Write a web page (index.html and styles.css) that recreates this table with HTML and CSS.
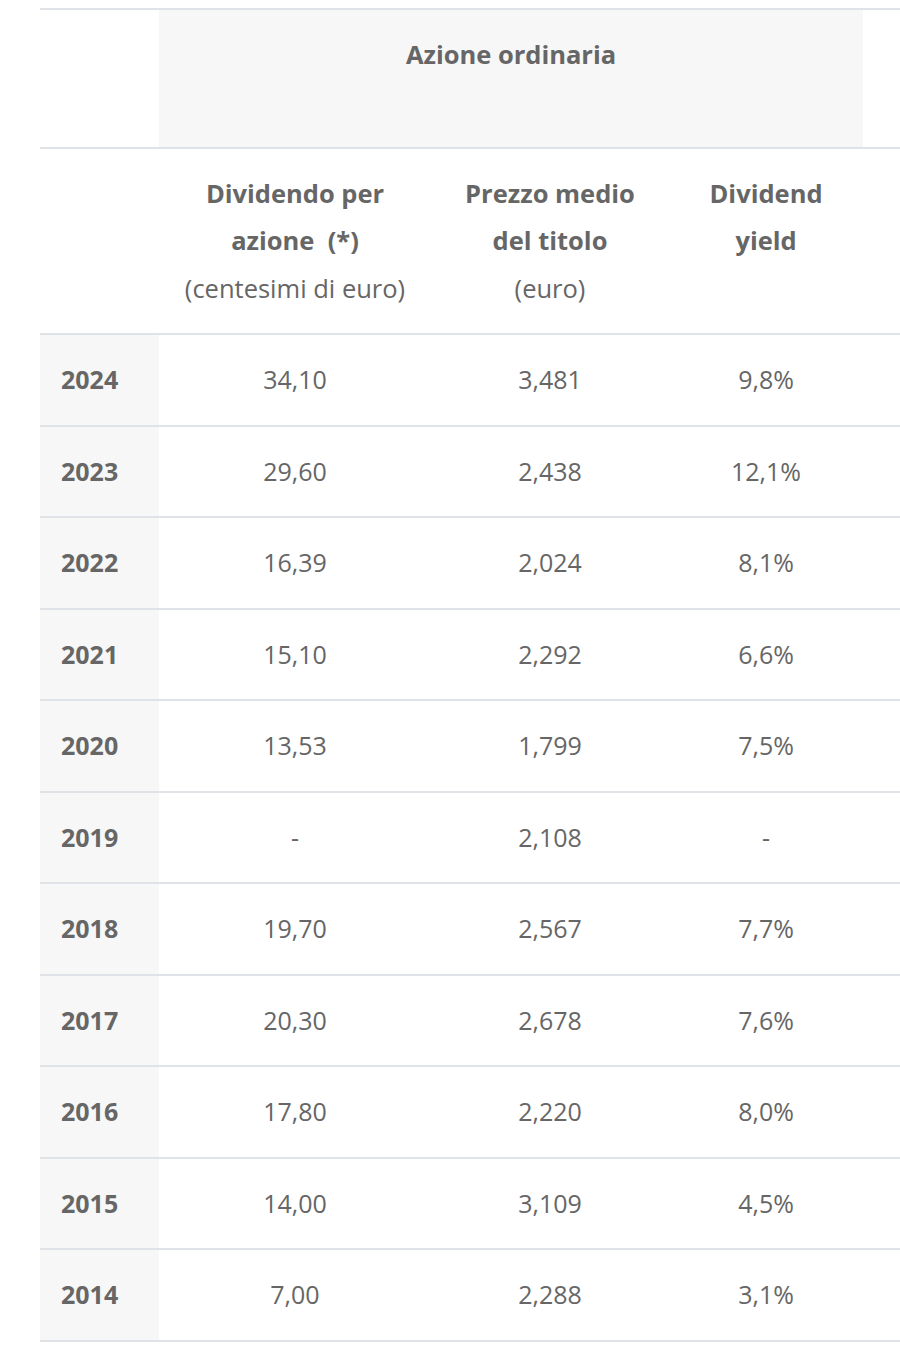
FILE: index.html
```html
<!DOCTYPE html>
<html lang="it">
<head>
<meta charset="utf-8">
<title>Dividendi</title>
<link rel="stylesheet" href="styles.css">
</head>
<body>
<div class="page">
<table class="divtable">
  <colgroup>
    <col class="c-year">
    <col class="c-div">
    <col class="c-price">
    <col class="c-yield">
    <col class="c-extra">
  </colgroup>
  <thead>
    <tr class="group-row">
      <th class="blank"></th>
      <th class="group" colspan="3">Azione ordinaria</th>
      <th class="blank"></th>
    </tr>
    <tr class="label-row">
      <th class="blank"></th>
      <th>Dividendo per<br>azione&nbsp; (*)<br><span class="unit">(centesimi di euro)</span></th>
      <th>Prezzo medio<br>del titolo<br><span class="unit">(euro)</span></th>
      <th>Dividend<br>yield</th>
      <th class="blank"></th>
    </tr>
  </thead>
  <tbody>
    <tr><th class="year">2024</th><td>34,10</td><td>3,481</td><td>9,8%</td><td class="blank"></td></tr>
    <tr><th class="year">2023</th><td>29,60</td><td>2,438</td><td>12,1%</td><td class="blank"></td></tr>
    <tr><th class="year">2022</th><td>16,39</td><td>2,024</td><td>8,1%</td><td class="blank"></td></tr>
    <tr><th class="year">2021</th><td>15,10</td><td>2,292</td><td>6,6%</td><td class="blank"></td></tr>
    <tr><th class="year">2020</th><td>13,53</td><td>1,799</td><td>7,5%</td><td class="blank"></td></tr>
    <tr><th class="year">2019</th><td>-</td><td>2,108</td><td>-</td><td class="blank"></td></tr>
    <tr><th class="year">2018</th><td>19,70</td><td>2,567</td><td>7,7%</td><td class="blank"></td></tr>
    <tr><th class="year">2017</th><td>20,30</td><td>2,678</td><td>7,6%</td><td class="blank"></td></tr>
    <tr><th class="year">2016</th><td>17,80</td><td>2,220</td><td>8,0%</td><td class="blank"></td></tr>
    <tr><th class="year">2015</th><td>14,00</td><td>3,109</td><td>4,5%</td><td class="blank"></td></tr>
    <tr><th class="year">2014</th><td>7,00</td><td>2,288</td><td>3,1%</td><td class="blank"></td></tr>
  </tbody>
</table>
</div>
</body>
</html>
```
FILE: styles.css
```css
html, body {
  margin: 0;
  padding: 0;
  background: #ffffff;
}
body {
  font-family: "Open Sans", "Liberation Sans", sans-serif;
  color: #666666;
  font-size: 25px;
}
.page {
  padding: 8px 0 0 40px;
  overflow: hidden;
}
.divtable {
  width: 860px;
  border-collapse: collapse;
  table-layout: fixed;
}
.c-year { width: 119px; }
.c-div { width: 272px; }
.c-price { width: 238px; }
.c-yield { width: 194px; }
.c-extra { width: 37px; }

.divtable th,
.divtable td {
  border-top: 2px solid #dfe3e8;
  border-bottom: 2px solid #dfe3e8;
  padding: 21px 0;
  line-height: 47.5px;
  text-align: center;
  vertical-align: top;
  color: #666666;
}
.divtable th {
  font-weight: 700;
}
.divtable thead th {
  font-size: 25.5px;
}
.divtable .group {
  background: #f7f7f7;
  padding-bottom: 68px;
  vertical-align: top;
}
.divtable .unit {
  font-weight: 400;
}
.divtable td {
  font-weight: 400;
  vertical-align: middle;
}
.divtable .year {
  background: #f7f7f7;
  vertical-align: middle;
  text-align: left;
  padding-left: 21px;
}
```
